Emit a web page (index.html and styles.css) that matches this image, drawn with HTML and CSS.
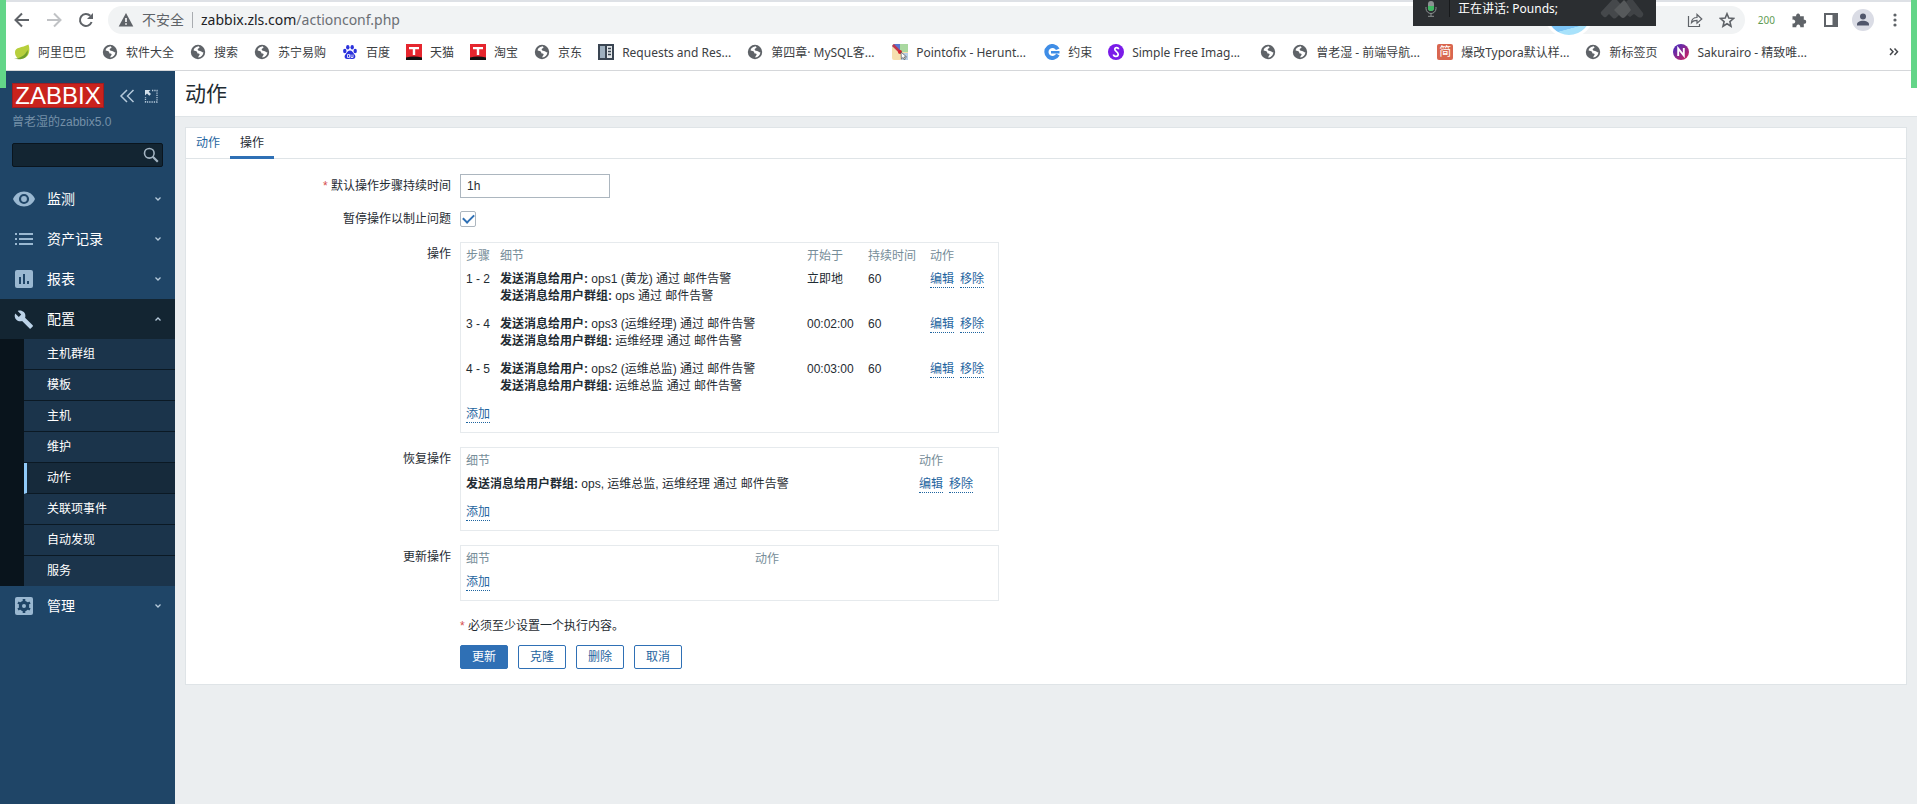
FILE: index.html
```html
<!DOCTYPE html>
<html lang="zh-CN">
<head>
<meta charset="utf-8">
<title>动作</title>
<link rel="stylesheet" href="styles.css">
</head>
<body>
<svg class="defs" width="0" height="0" aria-hidden="true">
  <symbol id="globe" viewBox="0 0 16 16">
    <circle cx="8" cy="8" r="7.200" fill="#5f6368"/>
    <path d="M8.600 2.300C5 3 3.800 4.600 3.600 6.400c1.500.2 2.600.5 3.300 1.300.6.800 0 1.500 1 1.800 1 .2 1.800.2 1.700 1.200-.1.900-1.200 1-1.400 2.900 3.200-.5 5-2.600 5.200-5.400-1.200.1-1.700-.5-2.500-1-1-.5-2.900-.2-3.200-1.500-.2-1.200 1-1.100 1.600-1.700.4-.5.1-1-.7-1.700z" fill="#fff"/>
  </symbol>
  <symbol id="tmall" viewBox="0 0 16 16">
    <path d="M0 0h16v16H0z" fill="#e5262e"/><path d="M0 13.500q8-2 16 0V16H0z" fill="#111"/><path d="M3 3h10v2.200H9.200V11H6.800V5.200H3z" fill="#fff"/>
  </symbol>
  <symbol id="chev" viewBox="0 0 8 8"><path d="M1.500 2.500 4 5l2.500-2.500" fill="none" stroke="currentColor" stroke-width="1.300"/></symbol>
</svg>

<header class="browser">
  <div class="toolbar">
    <button class="tool" aria-label="后退"><svg width="16" height="16" viewBox="0 0 16 16"><path d="M15 8H2M8 1.500 1.500 8 8 14.500" fill="none" stroke="#5f6368" stroke-width="2"/></svg></button>
    <button class="tool" aria-label="前进"><svg width="16" height="16" viewBox="0 0 16 16"><path d="M1 8h13M8 1.500 14.500 8 8 14.500" fill="none" stroke="#c0c2c5" stroke-width="2"/></svg></button>
    <button class="tool" aria-label="刷新"><svg width="16" height="16" viewBox="0 0 16 16"><path d="M13.600 10A6 6 0 1 1 12.300 3.800" fill="none" stroke="#5f6368" stroke-width="2"/><path d="M15 1v6H9z" fill="#5f6368"/></svg></button>
    <div class="address">
      <svg width="16" height="16" viewBox="0 0 16 16"><path d="M8 1 .7 14.500h14.600z" fill="#5f6368"/><path d="M7.200 6h1.600v4H7.200zM7.200 11.200h1.600v1.600H7.200z" fill="#fff"/></svg>
      <span class="insecure">不安全</span>
      <span class="url">zabbix.zls.com<span class="path">/actionconf.php</span></span>
      <span class="address-actions">
        <button class="tool" aria-label="分享"><svg width="16" height="16" viewBox="0 0 16 16"><path d="M1.500 4v10.500h11V12M4.500 10.500c.3-3.500 2.500-5 5.500-5V2.500L14.800 7 10 11.200V8.300c-2.500 0-4.200.6-5.500 2.200z" fill="none" stroke="#5f6368" stroke-width="1.200"/></svg></button>
        <button class="tool" aria-label="收藏"><svg width="16" height="16" viewBox="0 0 16 16"><path d="m8 1.800 1.800 4.300 4.700.4-3.600 3.100 1.100 4.600L8 11.700l-4 2.500 1.100-4.600L1.500 6.500l4.700-.4z" fill="none" stroke="#5f6368" stroke-width="1.600"/></svg></button>
      </span>
    </div>
    <div class="extensions">
      <span class="status">200</span>
      <button class="tool" aria-label="扩展"><svg width="16" height="16" viewBox="0 0 16 16"><path d="M1.500 4.200h3.700a2 2 0 1 1 3.800 0h3.800v3.600a2 2 0 1 1 0 3.900v3.500H9.200a2 2 0 1 0-3.800 0H1.500v-3.800a2 2 0 1 0 0-3.700z" fill="#5f6368"/></svg></button>
      <button class="tool" aria-label="侧边栏"><svg width="16" height="16" viewBox="0 0 16 16"><path d="M2 2h12v12H2z" fill="none" stroke="#5f6368" stroke-width="2"/><path d="M9.500 2H14v12H9.500z" fill="#5f6368"/></svg></button>
      <button class="tool avatar" aria-label="用户"><svg width="22" height="22" viewBox="0 0 22 22"><circle cx="11" cy="11" r="11" fill="#dadce5"/><circle cx="11" cy="7.500" r="3" fill="#50566b"/><path d="M5 16.500v-1.300c0-2.300 3-3.500 6-3.500s6 1.200 6 3.500v1.300z" fill="#50566b"/></svg></button>
      <button class="tool" aria-label="菜单"><svg width="16" height="16" viewBox="0 0 16 16" fill="#5f6368"><circle cx="8" cy="3" r="1.600"/><circle cx="8" cy="8" r="1.600"/><circle cx="8" cy="13" r="1.600"/></svg></button>
    </div>
    <div class="bubble"></div>
    <div class="speaking">
      <svg width="12" height="16" viewBox="0 0 12 16"><rect x="3" y="0" width="6" height="10" rx="3" fill="#8c9292"/><path d="M3 5h6v2a3 3 0 0 1-6 0z" fill="#3fb963"/><path d="M1 6v1.500a5 5 0 0 0 10 0V6M6 12.500V15M3 15.300h6" fill="none" stroke="#8c9292"/></svg>
      <span class="speaker">正在讲话: Pounds;</span>
      <svg class="watermark" width="44" height="22" viewBox="0 0 44 22"><path d="m1 14 12-13q2-1 4 1l8 9-8 8q-3 3-5 0l-3-3-3 3q-2 1-3-1-3-2-2-4z" fill="#45484b"/><path d="m14 12 10-10 9 9-8 8q-2 2-4 0z" fill="#56595b"/><path d="m26 4 3-3q2-1 4 1l10 13q1 2-1 4-2 1-4 0l-4-3-4 3-3-2 4-5z" fill="#404346"/></svg>
    </div>
  </div>
  <nav class="bookmarks">
    <a href="#"><svg viewBox="0 0 16 16"><path d="M1 8C1 3 8 4 14.500.5 17 8 14 14.500 7 14.800 3 15 1 12 1 8z" fill="#b7cf3c"/><path d="M0 14.500C5 15 11 12 13.500 6 15.500 13 8 17 0 14.500z" fill="#6f9f2c"/></svg>阿里巴巴</a>
    <a href="#"><svg><use href="#globe"/></svg>软件大全</a>
    <a href="#"><svg><use href="#globe"/></svg>搜索</a>
    <a href="#"><svg><use href="#globe"/></svg>苏宁易购</a>
    <a href="#"><svg viewBox="0 0 16 16" fill="#2b32dc"><ellipse cx="2.800" cy="7" rx="1.700" ry="2.200"/><ellipse cx="5.800" cy="3.300" rx="1.700" ry="2.300"/><ellipse cx="10.200" cy="3.300" rx="1.700" ry="2.300"/><ellipse cx="13.200" cy="7" rx="1.700" ry="2.200"/><path d="M8 6.500c2 0 2.600 1.800 4 3.200 2.300 2.300 1.500 5-1 5.300-1 .1-2-.3-3-.3s-2 .4-3 .3c-2.500-.3-3.300-3-1-5.300 1.400-1.400 2-3.200 4-3.200z"/><path d="M5.500 10.500h2v3h-2zM9 10.500v3h2v-3" fill="none" stroke="#fff" stroke-width=".8"/></svg>百度</a>
    <a href="#"><svg><use href="#tmall"/></svg>天猫</a>
    <a href="#"><svg><use href="#tmall"/></svg>淘宝</a>
    <a href="#"><svg><use href="#globe"/></svg>京东</a>
    <a href="#"><svg viewBox="0 0 16 16"><path d="M0 0h16v16H0z" fill="#3a4552"/><path d="M2 2h5v12H2z" fill="#9fb0bf"/><path d="M9 2h5v12H9z" fill="#e4e8eb"/><path d="M10 4.500h3M10 7.500h3M10 10.500h3" stroke="#3a4552" stroke-width="1.500"/></svg>Requests and Res...</a>
    <a href="#"><svg><use href="#globe"/></svg><span class="trim">第四章· MySQL客...</span></a>
    <a href="#"><svg viewBox="0 0 16 16"><rect width="16" height="16" rx="2" fill="#f6dfae"/><path d="M2 0h6v8L0 2z" fill="#5a78cf"/><path d="M8 0h8v8H8z" fill="#a9d8a0"/><path d="M9 9h7v7H9z" fill="#b7cfe8"/><path d="m1 1 7 7" stroke="#c3374d" stroke-width="2.500"/><circle cx="8" cy="8" r="2" fill="#d5202b"/><path d="m9 8 .4 7 1.700-1.600 1 2.300 1.200-.6-1-2.200h2.200z" fill="#fff" stroke="#555" stroke-width=".7"/></svg><span class="trim-latin">Pointofix - Herunt...</span></a>
    <a href="#"><svg viewBox="0 0 16 16"><path d="M15.500 4.500A8 8 0 1 0 15.500 11.500l-3.300-2A4 4 0 1 1 12 6z" fill="#3f8de6"/><path d="M7 7h8.500v2.500H7z" fill="#3f8de6"/></svg>约束</a>
    <a href="#"><svg viewBox="0 0 16 16"><circle cx="8" cy="8" r="8" fill="#7a1be8"/><path d="M10.500 5.300C10.500 3 6.800 3 6.800 5.300c0 2.200 3.400 2.600 3.400 5 0 2.700-4.500 2.900-4.700.2" fill="none" stroke="#fff" stroke-width="1.700"/></svg><span class="trim-latin">Simple Free Imag...</span></a>
    <a href="#" aria-label="书签"><svg><use href="#globe"/></svg></a>
    <a href="#"><svg><use href="#globe"/></svg><span class="trim">曾老湿 - 前端导航...</span></a>
    <a href="#"><span class="jian">简</span>爆改Typora默认样...</a>
    <a href="#"><svg><use href="#globe"/></svg>新标签页</a>
    <a href="#"><svg viewBox="0 0 16 16"><defs><linearGradient id="ng" x1="0" y1="0" x2="1" y2="1"><stop offset=".2" stop-color="#5a2ab0"/><stop offset="1" stop-color="#d8235a"/></linearGradient></defs><circle cx="8" cy="8" r="8" fill="url(#ng)"/><path d="M5.200 12V4.500l5.600 7V4" fill="none" stroke="#fff" stroke-width="1.900"/></svg>Sakurairo - 精致唯...</a>
    <button class="tool overflow" aria-label="更多书签"><svg width="10" height="10" viewBox="0 0 10 10"><path d="m1 1.500 3 3.200-3 3.200M5.500 1.500l3 3.200-3 3.200" fill="none" stroke="#45484c" stroke-width="1.500"/></svg></button>
  </nav>
</header>

<div class="app">
  <aside class="sidebar">
    <div class="brand">
      <a class="logo" href="#">ZABBIX</a>
      <button class="tool" aria-label="收起侧边栏"><svg width="16" height="14" viewBox="0 0 16 14"><path d="M8 1 2 7l6 6M14.500 1l-6 6 6 6" fill="none" stroke="#b5c9da" stroke-width="1.500"/></svg></button>
      <button class="tool" aria-label="隐藏侧边栏"><svg width="14" height="14" viewBox="0 0 14 14"><path d="M8 1.500h5v11.500H1.500V8" fill="none" stroke="#b5c9da" stroke-width="1.300" stroke-dasharray="1.300 1"/><path d="M1 1h5.500L4.700 2.800l2.300 2.300L5.300 6.800 3 4.500 1 6.500z" fill="#d3e0eb"/></svg></button>
    </div>
    <div class="server">曾老湿的zabbix5.0</div>
    <form class="search">
      <input type="text" aria-label="搜索">
      <button class="tool" type="button" aria-label="搜索"><svg width="16" height="16" viewBox="0 0 16 16"><circle cx="6.300" cy="6.300" r="4.800" fill="none" stroke="#a3b4c2" stroke-width="1.600"/><path d="m9.800 9.800 5 5" stroke="#a3b4c2" stroke-width="2.200"/></svg></button>
    </form>
    <nav class="menu">
      <a href="#"><svg class="icon" viewBox="0 0 24 24"><path d="M12 4.500C7 4.500 2.700 7.600 1 12c1.700 4.400 6 7.500 11 7.500s9.300-3.100 11-7.500c-1.700-4.400-6-7.500-11-7.500z" fill="currentColor"/><circle cx="12" cy="12" r="4" fill="none" stroke="#1f4567" stroke-width="2.200"/></svg>监测<svg class="chev"><use href="#chev"/></svg></a>
      <a href="#"><svg class="icon" viewBox="0 0 24 24"><path d="M3 6h2v2H3zM3 11h2v2H3zM3 16h2v2H3zM7 6h14v2H7zM7 11h14v2H7zM7 16h14v2H7z" fill="currentColor"/></svg>资产记录<svg class="chev"><use href="#chev"/></svg></a>
      <a href="#"><svg class="icon" viewBox="0 0 24 24"><rect x="3" y="3" width="18" height="18" rx="2" fill="currentColor"/><path d="M8 10v7M12 7v10M16 14v3" stroke="#1f4567" stroke-width="2"/></svg>报表<svg class="chev"><use href="#chev"/></svg></a>
      <a class="open" href="#"><svg class="icon" viewBox="0 0 24 24"><path d="m20.700 18.300-7.600-7.500c.7-1.900.3-4.100-1.300-5.700C10.200 3.500 7.700 3.100 5.700 4l3.500 3.500L6.800 10 3.200 6.400c-1 2.100-.5 4.600 1.200 6.300 1.600 1.600 3.800 2 5.700 1.300l7.500 7.600c.3.300.8.300 1.100 0l2-2c.4-.3.400-.9 0-1.300z" fill="currentColor"/></svg>配置<svg class="chev"><use href="#chev"/></svg></a>
      <div class="submenu">
        <a href="#">主机群组</a>
        <a href="#">模板</a>
        <a href="#">主机</a>
        <a href="#">维护</a>
        <a class="selected" href="#">动作</a>
        <a href="#">关联项事件</a>
        <a href="#">自动发现</a>
        <a href="#">服务</a>
      </div>
      <a href="#"><svg class="icon" viewBox="0 0 24 24"><rect x="3" y="3" width="18" height="18" rx="2" fill="currentColor"/><circle cx="12" cy="12" r="3.600" fill="none" stroke="#1f4567" stroke-width="3.200"/><path d="M12 5v3M12 16v3M6 8.500l2.500 1.500M15.500 14l2.500 1.500M6 15.500 8.500 14M15.500 10 18 8.500" stroke="#1f4567" stroke-width="2.600"/></svg>管理<svg class="chev"><use href="#chev"/></svg></a>
    </nav>
  </aside>

  <main class="content">
    <h1>动作</h1>
    <form class="card">
      <div class="tabs" role="tablist">
        <a href="#" role="tab">动作</a>
        <a class="active" href="#" role="tab" aria-selected="true">操作</a>
      </div>
      <div class="form">
        <label class="label" for="period"><span class="star">*</span> 默认操作步骤持续时间</label>
        <div><input class="text" id="period" type="text" value="1h"></div>

        <label class="label short" for="pause">暂停操作以制止问题</label>
        <div class="check"><input id="pause" type="checkbox" checked></div>

        <div class="label">操作</div>
        <div class="box">
          <table>
            <thead><tr><th class="c-step">步骤</th><th>细节</th><th class="c-start">开始于</th><th class="c-duration">持续时间</th><th class="c-action">动作</th></tr></thead>
            <tbody>
              <tr><td>1 - 2</td><td><b>发送消息给用户:</b> ops1 (黄龙) 通过 邮件告警<br><b>发送消息给用户群组:</b> ops 通过 邮件告警</td><td>立即地</td><td>60</td><td><span class="links"><a href="#">编辑</a><a href="#">移除</a></span></td></tr>
              <tr><td>3 - 4</td><td><b>发送消息给用户:</b> ops3 (运维经理) 通过 邮件告警<br><b>发送消息给用户群组:</b> 运维经理 通过 邮件告警</td><td>00:02:00</td><td>60</td><td><span class="links"><a href="#">编辑</a><a href="#">移除</a></span></td></tr>
              <tr><td>4 - 5</td><td><b>发送消息给用户:</b> ops2 (运维总监) 通过 邮件告警<br><b>发送消息给用户群组:</b> 运维总监 通过 邮件告警</td><td>00:03:00</td><td>60</td><td><span class="links"><a href="#">编辑</a><a href="#">移除</a></span></td></tr>
              <tr><td colspan="5"><span class="links"><a href="#">添加</a></span></td></tr>
            </tbody>
          </table>
        </div>

        <div class="label">恢复操作</div>
        <div class="box">
          <table>
            <thead><tr><th>细节</th><th class="c-recovery">动作</th></tr></thead>
            <tbody>
              <tr><td><b>发送消息给用户群组:</b> ops, 运维总监, 运维经理 通过 邮件告警</td><td><span class="links"><a href="#">编辑</a><a href="#">移除</a></span></td></tr>
              <tr><td colspan="2"><span class="links"><a href="#">添加</a></span></td></tr>
            </tbody>
          </table>
        </div>

        <div class="label">更新操作</div>
        <div class="box">
          <table>
            <thead><tr><th>细节</th><th class="c-update">动作</th></tr></thead>
            <tbody><tr><td colspan="2"><span class="links"><a href="#">添加</a></span></td></tr></tbody>
          </table>
        </div>

        <div class="footer">
          <p><span class="star">*</span> 必须至少设置一个执行内容。</p>
          <div class="buttons">
            <button class="btn primary" type="button">更新</button>
            <button class="btn" type="button">克隆</button>
            <button class="btn" type="button">删除</button>
            <button class="btn" type="button">取消</button>
          </div>
        </div>
      </div>
    </form>
  </main>
</div>
<div class="frame left"></div>
<div class="frame right"></div>
</body>
</html>
```

FILE: styles.css
```css
* { box-sizing: border-box; }

body {
  margin: 0;
  min-height: 100vh;
  display: flex;
  flex-direction: column;
  background: #ebeef0;
  color: #1f2c33;
  font: 12px/17px "Liberation Sans", "Noto Sans CJK SC", sans-serif;
}

a { color: inherit; text-decoration: none; }
svg { flex: none; display: block; }
.defs { position: absolute; }

.tool {
  display: flex;
  align-items: center;
  justify-content: center;
  width: 16px;
  height: 16px;
  padding: 0;
  border: 0;
  background: none;
}

/* Browser chrome */
.browser {
  background: #fff;
  border-top: 2px solid #dee1e6;
  border-bottom: 1px solid #d5d7da;
  font-family: "Noto Sans", "Noto Sans CJK SC", sans-serif;
}

.toolbar {
  position: relative;
  display: flex;
  align-items: center;
  gap: 16px;
  height: 36px;
  padding: 0 14px;
}

.address {
  flex: 1;
  display: flex;
  align-items: center;
  gap: 8px;
  height: 28px;
  margin: 0 -3px 0 -2px;
  padding: 0 10px;
  border-radius: 14px;
  background: #f1f3f4;
  font-size: 14px;
  line-height: 20px;
}

.insecure { padding-right: 8px; border-right: 1px solid #a9acb0; color: #5f6368; line-height: 16px; }
.url { color: #202124; }
.path { color: #6b6f74; }
.address-actions { display: flex; gap: 16px; margin-left: auto; }
.extensions { display: flex; align-items: center; gap: 16px; }
.status { color: #5f9c53; font-size: 10px; }
.avatar { width: 22px; height: 22px; margin: 0 -3px; }

.bubble {
  position: absolute;
  top: -14px;
  right: 323px;
  width: 50px;
  height: 50px;
  border: 3px solid #fff;
  border-radius: 50%;
  background: linear-gradient(165deg, #7cc4f5 78%, #a8e2fb 79%);
}

.speaking {
  position: absolute;
  top: -2px;
  right: 261px;
  display: flex;
  align-items: center;
  width: 243px;
  height: 26px;
  padding: 0 12px 9px;
  background: #2b2e31;
  color: #fff;
}

.speaker { margin-left: 12px; padding-left: 8px; border-left: 1px solid #17191b; }
.watermark { margin-left: auto; }

.bookmarks {
  display: flex;
  align-items: center;
  gap: 16px;
  height: 32px;
  padding: 0 18px 4px 14px;
  color: #3c4043;
  white-space: nowrap;
}

.bookmarks a { display: flex; align-items: center; gap: 8px; }
.bookmarks a svg { width: 16px; height: 16px; }
.trim { min-width: 105px; }
.trim-latin { min-width: 112px; }
.jian { width: 16px; height: 16px; border-radius: 2px; background: #d9664f; color: #fff; line-height: 16px; text-align: center; }
.overflow { width: 10px; margin-left: auto; }

.frame { position: absolute; top: 0; width: 6px; height: 88px; background: #63d588; }
.left { left: 0; }
.right { right: 0; }

/* Application */
.app { flex: 1; display: flex; }

.sidebar { flex: none; width: 175px; background: #1f4567; }
.brand { display: flex; align-items: center; padding: 12px 0 0 12px; }
.brand .tool { margin-left: 15px; }
.brand .tool + .tool { margin-left: 8px; }

.logo {
  width: 92px;
  height: 25px;
  border: 1px solid #a01c22;
  background: #c9231d;
  color: #fff;
  font: 24px/24px "Liberation Sans", sans-serif;
  text-align: center;
}

.server { margin: 6px 12px 12px; color: #7590a8; }

.search {
  display: flex;
  align-items: center;
  height: 24px;
  margin: 0 12px;
  padding-right: 3px;
  border: 1px solid #0a151e;
  border-radius: 2px;
  background: #132532;
}

.search input { flex: 1; min-width: 0; height: 20px; border: 0; background: none; color: #fff; }

.menu { padding-top: 12px; }

.menu > a {
  display: flex;
  align-items: center;
  height: 40px;
  padding: 0 13px 0 12px;
  color: #fff;
  font-size: 14px;
}

.icon { width: 24px; height: 24px; margin-right: 11px; color: #9ab8d1; }
.chev { width: 8px; height: 8px; margin-left: auto; color: #b5c9da; }
.menu .open { background: #132532; }
.open .icon { color: #bcd3e8; }
.open .chev { transform: rotate(180deg); }

.submenu { border-left: 24px solid #09141c; background: #1b344b; }

.submenu a {
  display: block;
  height: 31px;
  padding-left: 23px;
  border-bottom: 1px solid #0b1924;
  color: #fff;
  line-height: 30px;
}

.submenu a:last-child { height: 30px; border-bottom: 0; }
.submenu .selected { padding-left: 20px; border-left: 3px solid #90caf9; background: #162a3b; }

.content { flex: 1; min-width: 0; }

h1 {
  height: 46px;
  margin: 0 0 10px;
  padding-left: 10px;
  border-bottom: 1px solid #dfe4e7;
  background: #fff;
  font-size: 21px;
  font-weight: 400;
  line-height: 45px;
}

.card { margin: 0 10px; border: 1px solid #dfe4e7; background: #fff; }
.tabs { display: flex; height: 31px; border-bottom: 1px solid #dfe4e7; line-height: 30px; }
.tabs a { padding: 0 10px; color: #1f65a0; }
.tabs .active { margin-bottom: -1px; border-bottom: 3px solid #2f70b5; color: #1f2c33; }

.form {
  display: grid;
  grid-template-columns: 265px 1fr;
  column-gap: 9px;
  padding: 15px 0;
}

.label { padding-top: 4px; text-align: right; }
.short { padding-top: 0; }
.star { color: #d64e4e; }

.text {
  width: 150px;
  height: 24px;
  margin-bottom: 13px;
  padding: 0 6px;
  border: 1px solid #acb6bf;
  color: #1f2c33;
  font: inherit;
  display: block;
}

.check input {
  display: grid;
  place-items: center;
  appearance: none;
  width: 16px;
  height: 16px;
  margin: 0 0 15px;
  border: 1px solid #acb6bf;
  border-radius: 2px;
}

.check input::before {
  content: "";
  width: 9px;
  height: 5px;
  margin-bottom: 3px;
  border: solid #2f70b5;
  border-width: 0 0 2px 2px;
  transform: rotate(-45deg);
}

.box { width: 539px; margin-bottom: 14px; padding: 5px; border: 1px solid #e6eaed; }
table { width: 100%; border-collapse: collapse; table-layout: fixed; }
th { padding: 0 0 1px; color: #768d99; font-weight: 400; text-align: left; }
td { padding: 5px 0 6px; vertical-align: top; }
tbody tr:last-child td { padding-bottom: 4px; }
.c-step { width: 34px; }
.c-start { width: 61px; }
.c-duration { width: 62px; }
.c-action { width: 63px; }
.c-recovery { width: 74px; }
.c-update { width: 238px; }

.links { display: flex; gap: 6px; color: #1f65a0; }
.links a { height: 17px; border-bottom: 1px dotted #1f65a0; }

.footer { grid-column: 2; }
.footer p { margin: 3px 0 10px; }
.buttons { display: flex; gap: 10px; }

.btn {
  width: 48px;
  height: 24px;
  padding: 0;
  border: 1px solid #2f70b5;
  border-radius: 2px;
  background: #fff;
  color: #1f65a0;
  font: inherit;
}

.primary { background: #2f70b5; color: #fff; }
```
